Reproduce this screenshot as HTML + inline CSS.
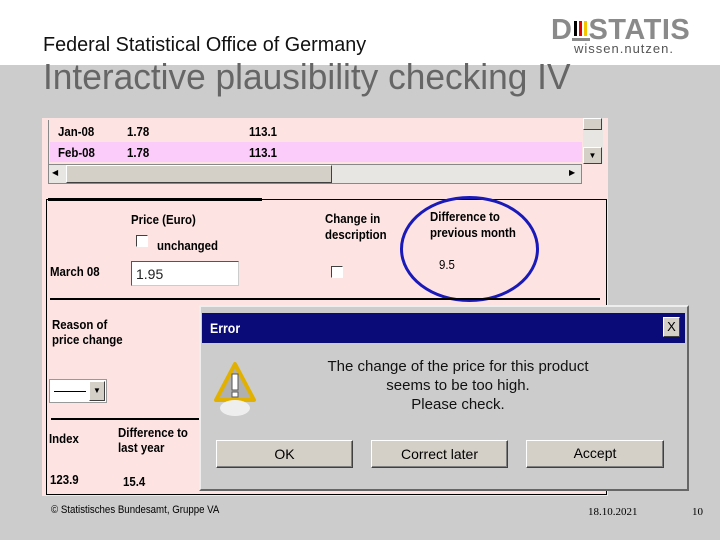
<!DOCTYPE html>
<html><head><meta charset="utf-8"><style>
*{margin:0;padding:0;box-sizing:border-box}
body{width:720px;height:540px;position:relative;overflow:hidden;background:#cccccc;font-family:"Liberation Sans",sans-serif}
.a{position:absolute}
.t{font-family:"Liberation Sans",sans-serif;font-size:13px;color:#000;position:absolute;transform:scaleX(.88);transform-origin:left top;white-space:nowrap}
.b{font-weight:bold}
.btn{position:absolute;background:#d4d0c8;border:1px solid;border-color:#fff #404040 #404040 #fff;box-shadow:inset -1px -1px #808080;font-size:14px;text-align:center;line-height:26px;color:#000}
.cb{position:absolute;width:12px;height:12px;background:#fff;border:1px solid;border-color:#404040 #fff #fff #404040}
</style></head><body>
<div class="a" style="left:0;top:0;width:720px;height:65px;background:#fff"></div>
<div class="a" style="left:43px;top:34px;font-size:20px;color:#111;transform:scaleX(.99);transform-origin:left;white-space:nowrap">Federal Statistical Office of Germany</div>
<div class="a" style="left:551px;top:14px;font-size:29px;font-weight:bold;color:#8a8a8a;letter-spacing:0.5px">D<span style="display:inline-block;width:16px"></span>STATIS</div>
<div class="a" style="left:574px;top:21px;width:3px;height:15px;background:#000"></div>
<div class="a" style="left:579px;top:21px;width:3px;height:15px;background:#d00"></div>
<div class="a" style="left:584px;top:21px;width:3px;height:15px;background:#f5c400"></div>
<div class="a" style="left:572px;top:38px;width:18px;height:3px;background:#8a8a8a"></div>
<div class="a" style="left:574px;top:41px;font-size:13px;color:#555;letter-spacing:1px">wissen.nutzen.</div>
<div class="a" style="left:43px;top:56px;font-size:36px;color:#666;transform:scaleX(.98);transform-origin:left;white-space:nowrap">Interactive plausibility checking IV</div>

<div class="a" style="left:42px;top:118px;width:566px;height:378px;background:#fde4e2"></div>
<div class="a" style="left:48px;top:120px;width:534px;height:44px;border-left:1px solid #888"></div>
<div class="a" style="left:50px;top:142px;width:532px;height:20px;background:#fbccfa"></div>
<div class="t b" style="left:58px;top:124px">Jan-08</div><div class="t b" style="left:127px;top:124px">1.78</div><div class="t b" style="left:249px;top:124px">113.1</div>
<div class="t b" style="left:58px;top:145px">Feb-08</div><div class="t b" style="left:127px;top:145px">1.78</div><div class="t b" style="left:249px;top:145px">113.1</div>
<div class="a" style="left:48px;top:164px;width:534px;height:20px;background:#e8e6e2;border:1px solid #888"></div>
<div class="a" style="left:66px;top:165px;width:266px;height:18px;background:#d4d0c8;border:1px solid;border-color:#fff #404040 #404040 #fff"></div>
<div class="a" style="left:52px;top:168px;font-size:8px">◀</div>
<div class="a" style="left:569px;top:168px;font-size:8px">▶</div>
<div class="a" style="left:583px;top:118px;width:20px;height:46px;background:#e8e6e2"></div>
<div class="a" style="left:583px;top:118px;width:19px;height:12px;background:#d4d0c8;border:1px solid;border-color:#fff #404040 #404040 #fff"></div>
<div class="a" style="left:583px;top:147px;width:19px;height:17px;background:#d4d0c8;border:1px solid;border-color:#fff #404040 #404040 #fff;font-size:8px;text-align:center;line-height:15px">▼</div>

<div class="a" style="left:46px;top:199px;width:561px;height:296px;border:1px solid #000"></div>
<div class="a" style="left:48px;top:198px;width:214px;height:3px;background:#000"></div>
<div class="t b" style="left:131px;top:212px">Price (Euro)</div>
<div class="cb" style="left:136px;top:235px"></div>
<div class="t b" style="left:157px;top:238px">unchanged</div>
<div class="t b" style="left:50px;top:264px">March 08</div>
<div class="a" style="left:131px;top:261px;width:108px;height:25px;background:#fff;border:1px solid;border-color:#555 #ccc #ccc #555;font-size:14px;padding:4px 4px;color:#222">1.95</div>
<div class="t b" style="left:325px;top:211px">Change in</div>
<div class="t b" style="left:325px;top:227px">description</div>
<div class="cb" style="left:331px;top:266px"></div>
<div class="t b" style="left:430px;top:209px">Difference to</div>
<div class="t b" style="left:430px;top:225px">previous month</div>
<div class="t" style="left:439px;top:257px">9.5</div>
<div class="a" style="left:400px;top:196px;width:139px;height:106px;border:3px solid #1a1ab8;border-radius:50%"></div>
<div class="a" style="left:50px;top:298px;width:550px;height:2px;background:#000"></div>
<div class="t b" style="left:52px;top:317px">Reason of</div>
<div class="t b" style="left:52px;top:332px">price change</div>
<div class="a" style="left:49px;top:379px;width:58px;height:24px;background:#fff;border:1px solid #999"></div>
<div class="a" style="left:54px;top:391px;width:32px;height:1px;background:#000"></div>
<div class="a" style="left:89px;top:381px;width:16px;height:20px;background:#d4d0c8;border:1px solid;border-color:#fff #404040 #404040 #fff;font-size:8px;text-align:center;line-height:18px">▼</div>
<div class="a" style="left:51px;top:418px;width:148px;height:2px;background:#000"></div>
<div class="t b" style="left:49px;top:431px">Index</div>
<div class="t b" style="left:118px;top:425px">Difference to</div>
<div class="t b" style="left:118px;top:440px">last year</div>
<div class="t b" style="left:50px;top:472px">123.9</div>
<div class="t b" style="left:123px;top:474px">15.4</div>

<div class="a" style="left:199px;top:305px;width:490px;height:186px;background:#cccccc;border:2px solid;border-color:#eee #666 #666 #eee"></div>
<div class="a" style="left:202px;top:313px;width:483px;height:30px;background:#0a0a78"></div>
<div class="t b" style="left:210px;top:320px;color:#fff;font-size:14px">Error</div>
<div class="a" style="left:663px;top:317px;width:17px;height:20px;background:#d4d0c8;border:1px solid;border-color:#fff #404040 #404040 #fff;font-size:13px;text-align:center;line-height:18px">X</div>
<svg class="a" style="left:212px;top:360px" width="46" height="60" viewBox="0 0 46 60"><path d="M23 4 L42 40 L4 40 Z" fill="#b0b0b0" stroke="#e2b100" stroke-width="4" stroke-linejoin="round"/><rect x="20" y="14" width="6" height="16" fill="#fff" stroke="#555"/><rect x="20" y="32" width="6" height="5" fill="#fff" stroke="#555"/><ellipse cx="23" cy="48" rx="15" ry="8" fill="#eee"/></svg>
<div class="a" style="left:258px;top:357px;width:400px;text-align:center;font-size:15px;line-height:19px;color:#111">The change of the price for this product<br>seems to be too high.<br>Please check.</div>
<div class="btn" style="left:216px;top:440px;width:137px;height:28px">OK</div>
<div class="btn" style="left:371px;top:440px;width:137px;height:28px">Correct later</div>
<div class="btn" style="left:526px;top:440px;width:138px;height:28px;line-height:24px">Accept</div>

<div class="t" style="left:51px;top:504px;font-size:11px">© Statistisches Bundesamt, Gruppe VA</div>
<div class="a" style="left:588px;top:506px;font-size:11px;font-family:'Liberation Serif',serif">18.10.2021</div>
<div class="a" style="left:692px;top:506px;font-size:11px;font-family:'Liberation Serif',serif">10</div>
</body></html>
